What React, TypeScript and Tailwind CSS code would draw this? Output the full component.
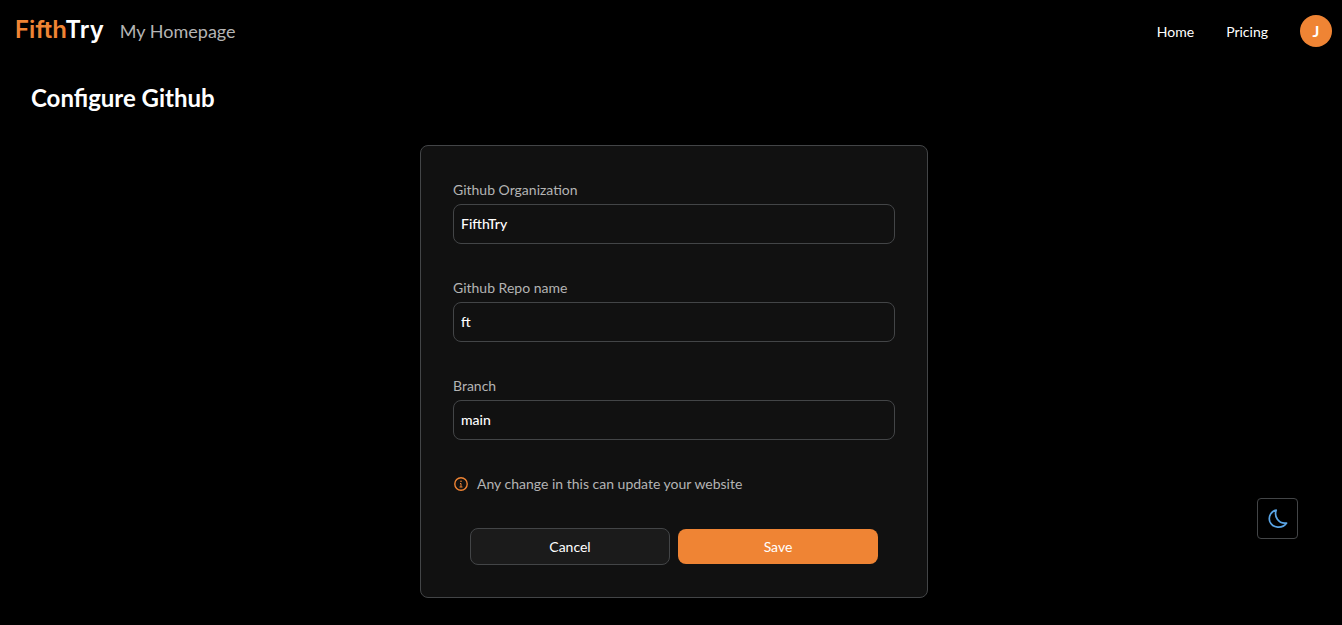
const fields = [
  { id: "organization", label: "Github Organization", value: "FifthTry" },
  { id: "repo", label: "Github Repo name", value: "ft" },
  { id: "branch", label: "Branch", value: "main" },
];

function Header() {
  return (
    <header className="flex items-center justify-between pl-[15px] pr-[10px] pt-[15px]">
      <div className="flex items-center gap-4">
        <a href="#" className="pb-[2px] font-['Inter',sans-serif] text-2xl leading-[30px] font-semibold text-[#ef8434]">
          Fifth<span className="text-white">Try</span>
        </a>
        <span className="text-lg leading-8 text-[#b4b4b4]">My Homepage</span>
      </div>
      <nav className="flex items-center gap-8 text-sm text-white">
        <a href="#" className="pt-[2px] leading-[30px]">Home</a>
        <a href="#" className="pt-[2px] leading-[30px]">Pricing</a>
        <button type="button" aria-label="Account" className="size-8 rounded-full bg-[#ef8434] text-base leading-8 font-bold">
          J
        </button>
      </nav>
    </header>
  );
}

function Field({ id, label, value }: { id: string; label: string; value: string }) {
  return (
    <div className="flex flex-col gap-[2px]">
      <label htmlFor={id} className="text-sm leading-6 text-[#b4b4b4]">
        {label}
      </label>
      <input
        id={id}
        type="text"
        defaultValue={value}
        className="h-10 w-full rounded-lg border border-[#434547] bg-transparent px-[7px] pb-[2px] text-sm font-medium text-white outline-none"
      />
    </div>
  );
}

export default function App() {
  return (
    <div className="min-h-screen bg-black font-['Lato',sans-serif] text-white">
      <Header />
      <main className="flex flex-col pt-9 pr-[25px] pb-7 pl-[31px]">
        <h1 className="text-2xl leading-[30px] font-bold">Configure Github</h1>
        <form className="mt-8 flex w-full max-w-[508px] flex-col gap-8 self-center rounded-lg border border-[#434547] bg-[#111111] p-8">
          {fields.map((field) => (
            <Field key={field.id} {...field} />
          ))}
          <p className="flex items-center gap-2 text-sm leading-6 text-[#b4b4b4]">
            <svg viewBox="0 0 16 16" className="size-4" fill="none" stroke="#ef8434" aria-hidden="true">
              <circle cx="8" cy="8" r="6.2" strokeWidth="1.4" />
              <path d="M7 7.5H8v3.5M6.5 11h3" strokeWidth="1" />
              <circle cx="8" cy="5.3" r="0.8" fill="#ef8434" stroke="none" />
            </svg>
            Any change in this can update your website
          </p>
          <div className="flex items-center justify-center gap-2 text-sm text-white">
            <button type="button" className="h-[37px] w-[200px] rounded-lg border border-[#434547] bg-[#1b1b1b]">
              Cancel
            </button>
            <button type="submit" className="h-[35px] w-[200px] rounded-lg bg-[#ef8434]">
              Save
            </button>
          </div>
        </form>
      </main>
      <button
        type="button"
        aria-label="Switch colour mode"
        className="fixed right-11 bottom-[86px] flex size-[41px] items-center justify-center rounded-sm border border-[#434547] bg-black"
      >
        <svg viewBox="0 0 20 20" className="size-5" fill="none" stroke="#5aa5e6" strokeWidth="1.7" strokeLinejoin="round" aria-hidden="true">
          <path d="M8.2 1.2C6 7 10 15.2 18.6 14C14.500 20 4.500 19.500 1.800 12.500C0 7 3.500 2 8.200 1.200Z" />
        </svg>
      </button>
    </div>
  );
}
